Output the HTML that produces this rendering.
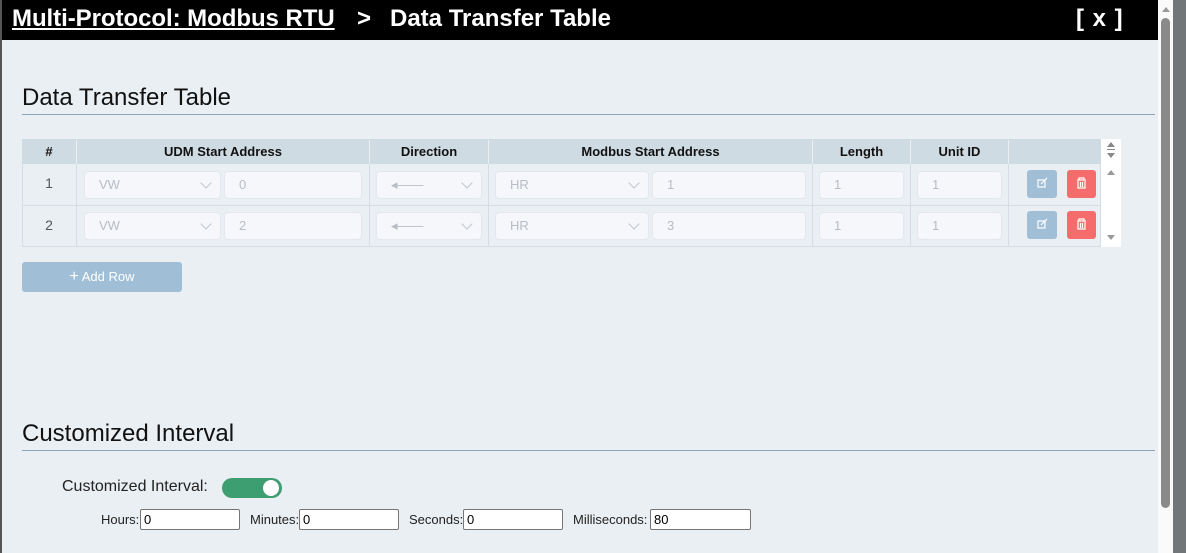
<!DOCTYPE html>
<html><head><style>
*{box-sizing:border-box;margin:0;padding:0}
body{width:1186px;height:553px;overflow:hidden;background:#eaeff3;font-family:"Liberation Sans",Arial,sans-serif;position:relative}
.a{position:absolute}
.hdr{left:2px;top:0;width:1156px;height:40px;background:#000;color:#fff;font-weight:bold;font-size:24px}
.in{position:absolute;background:#f5f7fa;border:1px solid #e4e8ee;border-radius:4px;height:28px;color:#b8bcc4;font-size:13px;padding-left:14px;line-height:26px}
.chev{position:absolute;right:10px;top:7px;width:8px;height:8px;border-right:1px solid #c0c4cc;border-bottom:1px solid #c0c4cc;transform:rotate(45deg)}
.hc{position:absolute;top:139px;height:25px;background:#cfdbe3;font-weight:bold;font-size:13px;text-align:center;line-height:25px;color:#111}
.num{position:absolute;left:22px;width:54px;text-align:center;font-size:14px;color:#555}
.eb{position:absolute;width:30px;height:28px;border-radius:3px;background:#a0bfd6}
.db{position:absolute;width:29px;height:28px;border-radius:3px;background:#f56c6c}
.lbl{position:absolute;font-size:13px;color:#222}
.box{position:absolute;height:21px;border:1px solid #767676;background:#fff;font-size:13px;padding-left:3px;line-height:19px;border-radius:2px}
</style></head><body>
<div class="a" style="left:0;top:0;width:2px;height:553px;background:#555"></div>
<div class="a hdr"><span class="a" style="left:10px;top:5px;text-decoration:underline;letter-spacing:-0.05px">Multi-Protocol: Modbus RTU</span><span class="a" style="left:355px;top:5px">&gt;</span><span class="a" style="left:388px;top:5px">Data Transfer Table</span><span class="a" style="left:1074px;top:5px;letter-spacing:1px">[ x ]</span></div>
<div class="a" style="left:1158px;top:0;width:15px;height:553px;background:#fafafa"></div>
<div class="a" style="left:1161px;top:18px;width:9px;height:490px;background:#8a8a8a;border-radius:5px"></div>
<div class="a" style="left:1162px;top:7px;width:0;height:0;border-left:4px solid transparent;border-right:4px solid transparent;border-bottom:5px solid #999"></div>
<div class="a" style="left:1173px;top:0;width:13px;height:553px;background:#717679"></div>

<div class="a" style="left:22px;top:84px;font-size:24px;color:#111">Data Transfer Table</div>
<div class="a" style="left:22px;top:114px;width:1133px;height:1px;background:#8ea5b8"></div>

<div class="a" style="left:22px;top:139px;width:1079px;height:108px;background:#eaeff3;border:1px solid #d4dde4"></div>
<div class="a" style="left:1101px;top:139px;width:20px;height:108px;background:#fff"></div>
<div class="a" style="left:1107px;top:142px;border-left:4px solid transparent;border-right:4px solid transparent;border-bottom:5px solid #888"></div>
<div class="a" style="left:1107px;top:149px;width:8px;height:1px;background:#888"></div>
<div class="a" style="left:1107px;top:153px;border-left:4px solid transparent;border-right:4px solid transparent;border-top:5px solid #888"></div>
<div class="a" style="left:1107px;top:170px;border-left:4px solid transparent;border-right:4px solid transparent;border-bottom:5px solid #999"></div>
<div class="a" style="left:1107px;top:235px;border-left:4px solid transparent;border-right:4px solid transparent;border-top:5px solid #999"></div>

<div class="hc" style="left:22px;width:54px">#</div>
<div class="hc" style="left:77px;width:292px">UDM Start Address</div>
<div class="hc" style="left:370px;width:118px">Direction</div>
<div class="hc" style="left:489px;width:323px">Modbus Start Address</div>
<div class="hc" style="left:813px;width:97px">Length</div>
<div class="hc" style="left:911px;width:97px">Unit ID</div>
<div class="hc" style="left:1009px;width:92px"></div>
<div class="a" style="left:22px;top:205px;width:1079px;height:1px;background:#d4dde4"></div>
<div class="a" style="left:76px;top:164px;width:1px;height:83px;background:#d4dde4"></div>
<div class="a" style="left:369px;top:164px;width:1px;height:83px;background:#d4dde4"></div>
<div class="a" style="left:488px;top:164px;width:1px;height:83px;background:#d4dde4"></div>
<div class="a" style="left:812px;top:164px;width:1px;height:83px;background:#d4dde4"></div>
<div class="a" style="left:910px;top:164px;width:1px;height:83px;background:#d4dde4"></div>
<div class="a" style="left:1008px;top:164px;width:1px;height:83px;background:#d4dde4"></div>

<div class="num" style="top:175px">1</div>
<div class="in" style="left:84px;top:171px;width:137px">VW<span class="chev"></span></div>
<div class="in" style="left:224px;top:171px;width:138px">0</div>
<div class="in" style="left:376px;top:171px;width:106px">◂——<span class="chev"></span></div>
<div class="in" style="left:495px;top:171px;width:154px">HR<span class="chev"></span></div>
<div class="in" style="left:652px;top:171px;width:154px">1</div>
<div class="in" style="left:819px;top:171px;width:85px">1</div>
<div class="in" style="left:917px;top:171px;width:85px">1</div>
<div class="eb" style="left:1027px;top:170px"></div><div class="db" style="left:1067px;top:170px"></div>

<div class="num" style="top:217px">2</div>
<div class="in" style="left:84px;top:212px;width:137px">VW<span class="chev"></span></div>
<div class="in" style="left:224px;top:212px;width:138px">2</div>
<div class="in" style="left:376px;top:212px;width:106px">◂——<span class="chev"></span></div>
<div class="in" style="left:495px;top:212px;width:154px">HR<span class="chev"></span></div>
<div class="in" style="left:652px;top:212px;width:154px">3</div>
<div class="in" style="left:819px;top:212px;width:85px">1</div>
<div class="in" style="left:917px;top:212px;width:85px">1</div>
<div class="eb" style="left:1027px;top:211px"></div><div class="db" style="left:1067px;top:211px"></div>

<svg class="a" style="left:0;top:0" width="1186" height="260">
<g fill="none" stroke="#fff" stroke-width="1.2">
<rect x="1038" y="180" width="7" height="7"/><path d="M1041 184 L1047 178"/>
<rect x="1038" y="221" width="7" height="7"/><path d="M1041 225 L1047 219"/>
<path d="M1077 180h9M1079 180v-2h5v2M1078 181v7h7v-7M1080.5 182v5M1082.5 182v5"/>
<path d="M1077 221h9M1079 221v-2h5v2M1078 222v7h7v-7M1080.5 223v5M1082.5 223v5"/>
</g></svg>

<div class="a" style="left:22px;top:262px;width:160px;height:30px;background:#a0bfd6;border-radius:3px;color:#fff;font-size:13px;text-align:center;line-height:30px"><span style="font-size:16px;font-weight:300">+</span> Add Row</div>

<div class="a" style="left:22px;top:420px;font-size:24px;color:#111">Customized Interval</div>
<div class="a" style="left:22px;top:450px;width:1133px;height:1px;background:#8ea5b8"></div>
<div class="a" style="left:62px;top:478px;font-size:16px;color:#222">Customized Interval:</div>
<div class="a" style="left:222px;top:478px;width:60px;height:20px;border-radius:10px;background:#3d9e72"></div>
<div class="a" style="left:263px;top:480px;width:16px;height:16px;border-radius:8px;background:#fff"></div>
<div class="lbl" style="left:101px;top:512px">Hours:</div><div class="box" style="left:140px;top:509px;width:100px">0</div>
<div class="lbl" style="left:250px;top:512px">Minutes:</div><div class="box" style="left:299px;top:509px;width:100px">0</div>
<div class="lbl" style="left:409px;top:512px">Seconds:</div><div class="box" style="left:463px;top:509px;width:100px">0</div>
<div class="lbl" style="left:573px;top:512px">Milliseconds:</div><div class="box" style="left:650px;top:509px;width:101px">80</div>
</body></html>
